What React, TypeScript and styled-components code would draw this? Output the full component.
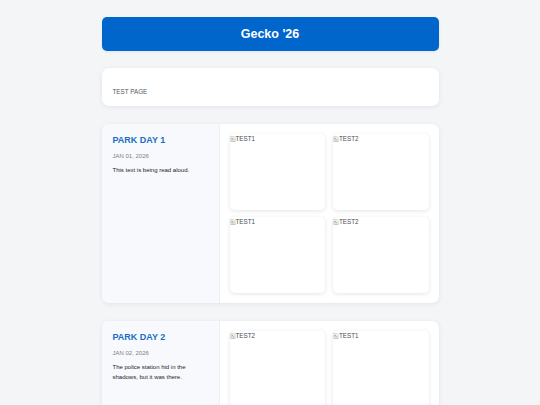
import React from "react"
import styled, { createGlobalStyle } from "styled-components"

const GlobalStyle = createGlobalStyle`
  html, body {
    margin: 0;
    padding: 0;
    background: #f4f5f7;
    font-family: "Liberation Sans", Arial, Helvetica, sans-serif;
  }
`

const Page = styled.main`
  width: 337px;
  margin: 0 auto;
  padding: 17px 0 0;
  display: flex;
  flex-direction: column;
  gap: 18px;
`

const Header = styled.header`
  height: 34px;
  margin-bottom: -1px;
  background: #0066cc;
  border-radius: 5px;
  display: flex;
  align-items: center;
  justify-content: center;
  box-shadow: 0 1px 3px rgba(0, 0, 0, 0.08);
`

const HeaderTitle = styled.h1`
  margin: 0;
  color: #ffffff;
  font-size: 12.5px;
  font-weight: 700;
`

const Card = styled.section`
  background: #ffffff;
  border-radius: 7px;
  box-shadow: 0 1px 5px rgba(20, 30, 50, 0.08);
  overflow: hidden;
`

const IntroCard = styled(Card)`
  height: 38px;
  padding: 0 11px 11px;
  display: flex;
  align-items: flex-end;
  box-sizing: border-box;
`

const IntroText = styled.p`
  margin: 0;
  font-size: 6.3px;
  color: #555a60;
  text-transform: uppercase;
`

const DayCard = styled(Card)`
  display: grid;
  grid-template-columns: 118px 1fr;
`

const DayInfo = styled.div`
  background: #f7f9fc;
  padding: 11px 11px;
  border-right: 1px solid #eef0f4;
`

const DayTitle = styled.h2`
  margin: 0 0 8px;
  font-size: 9px;
  font-weight: 700;
  color: #1a6ec4;
`

const DayDate = styled.div`
  font-size: 6px;
  color: #7a7f86;
  margin-bottom: 6px;
`

const DayText = styled.p`
  margin: 0;
  font-size: 6px;
  line-height: 10px;
  color: #1f2328;
`

const Gallery = styled.div`
  display: grid;
  grid-template-columns: 1fr 1fr;
  gap: 7px 8px;
  padding: 10px 10px 10px 10px;
`

const Photo = styled.div`
  height: 76px;
  background: #ffffff;
  border-radius: 5px;
  box-shadow: 0 1px 4px rgba(20, 30, 50, 0.12);
  display: flex;
  align-items: flex-start;
  padding: 1px 0 0 0;
  box-sizing: border-box;
`

const AltText = styled.span`
  font-size: 6.3px;
  color: #4a4e54;
  line-height: 7px;
`

const BrokenIcon = () => (
  <svg width="6" height="6" viewBox="0 0 16 16" aria-hidden="true" style={{ marginTop: 1 }}>
    <path d="M2 1h8l4 4v4l-2 2-2-2-2 2-2-2-2 2-2-2z" fill="#f2f2f2" stroke="#9a9a9a" strokeWidth="1" />
    <path d="M3 9l3-3 3 3" fill="none" stroke="#5aa83c" strokeWidth="2" />
    <path d="M2 12l2 2 2-2 2 2 2-2 2 2 2-2v3H2z" fill="#e8e8e8" stroke="#9a9a9a" strokeWidth="1" />
  </svg>
)

const Picture = ({ alt }: { alt: string }) => (
  <Photo>
    <BrokenIcon />
    <AltText>{alt}</AltText>
  </Photo>
)

interface Day {
  title: string
  date: string
  text: string
  photos: string[]
}

const days: Day[] = [
  {
    title: "PARK DAY 1",
    date: "JAN 01, 2026",
    text: "This text is being read aloud.",
    photos: ["TEST1", "TEST2", "TEST1", "TEST2"],
  },
  {
    title: "PARK DAY 2",
    date: "JAN 02, 2026",
    text: "The police station hid in the shadows, but it was there.",
    photos: ["TEST2", "TEST1", "TEST2", "TEST1"],
  },
]

const App = () => {
  return (
    <>
      <GlobalStyle />
      <Page>
        <Header>
          <HeaderTitle>Gecko '26</HeaderTitle>
        </Header>
        <IntroCard>
          <IntroText>Test page</IntroText>
        </IntroCard>
        {days.map((day) => (
          <DayCard key={day.title}>
            <DayInfo>
              <DayTitle>{day.title}</DayTitle>
              <DayDate>{day.date}</DayDate>
              <DayText>{day.text}</DayText>
            </DayInfo>
            <Gallery>
              {day.photos.map((p, i) => (
                <Picture key={i} alt={p} />
              ))}
            </Gallery>
          </DayCard>
        ))}
      </Page>
    </>
  )
}

export default App
